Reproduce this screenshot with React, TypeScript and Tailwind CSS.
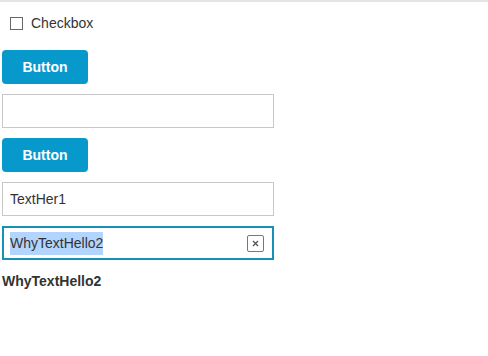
export default function App() {
  return (
    <div className="min-h-[356px] w-full bg-white font-['Liberation_Sans',Arial,sans-serif] text-[14px] text-[#333]">
      <div className="h-[2px] w-full bg-[#e4e4e4]" />
      <div className="flex flex-col px-[2px] pt-[14px]">
        <label className="flex h-[14px] items-center gap-[8px] pl-[8px]">
          <span className="h-[13px] w-[13px] border border-[#666] bg-white" />
          <span>Checkbox</span>
        </label>
        <button className="mt-[20px] h-[34px] w-[86px] rounded-[4px] bg-[#0899cc] text-[14px] font-bold text-white">
          Button
        </button>
        <div className="mt-[10px] h-[34px] w-[272px] border border-[#c8c8c8] bg-white" />
        <button className="mt-[10px] h-[34px] w-[86px] rounded-[4px] bg-[#0899cc] text-[14px] font-bold text-white">
          Button
        </button>
        <div className="mt-[10px] flex h-[34px] w-[272px] items-center border border-[#c8c8c8] bg-white px-[7px]">
          TextHer1
        </div>
        <div className="mt-[10px] flex h-[34px] w-[272px] items-center justify-between border-2 border-[#1790b8] bg-white pl-[6px] pr-[8px]">
          <span className="bg-[#b3d4fc] py-[1px]">WhyTextHello2</span>
          <span className="flex h-[17px] w-[17px] items-center justify-center rounded-[2px] border border-[#777] bg-white">
            <svg width="7" height="7" viewBox="0 0 7 7">
              <path d="M1 1L6 6M6 1L1 6" stroke="#555" strokeWidth="1.3" />
            </svg>
          </span>
        </div>
        <div className="mt-[11px] font-bold">WhyTextHello2</div>
      </div>
    </div>
  );
}
